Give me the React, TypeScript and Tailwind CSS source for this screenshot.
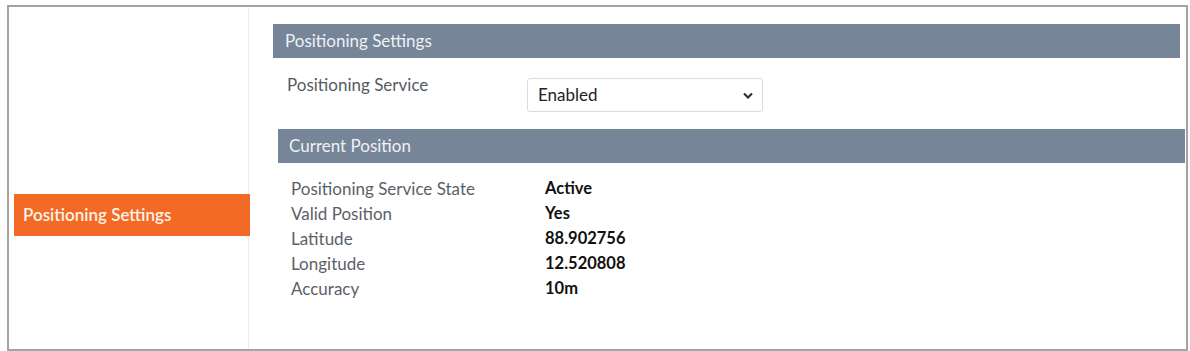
import { useState } from 'react';

const rows = [
  { label: 'Positioning Service State', value: 'Active' },
  { label: 'Valid Position', value: 'Yes' },
  { label: 'Latitude', value: '88.902756' },
  { label: 'Longitude', value: '12.520808' },
  { label: 'Accuracy', value: '10m' },
];

export default function App() {
  const [service, setService] = useState('Enabled');

  return (
    <div className="w-[1190px] h-[351px] bg-white pl-[7px] pt-[5px] font-['Lato','Liberation_Sans',sans-serif]">
      <div className="flex w-[1181px] h-[346px] border-2 border-[#a3a3a3]">
        {/* sidebar */}
        <div className="w-[240px] shrink-0 border-r border-[#ececec] pl-[5px] pt-[187px]">
          <div className="h-[42px] w-[236px] bg-[#f26a26] flex items-center pl-[9px] text-[17px] font-semibold text-[#fdf3e6]">
            Positioning Settings
          </div>
        </div>

        {/* content */}
        <div className="flex-1 pl-[24px] pr-[2px] pt-[17px]">
          <div className="w-[907px] h-[34px] bg-[#778599] flex items-center pl-[12px] text-[17px] text-[#eef1f5]">
            Positioning Settings
          </div>

          <div className="flex items-start h-[71px]">
            <div className="pl-[14px] pt-[14px] w-[254px] text-[17px] text-[#555b62]">Positioning Service</div>
            <div className="relative mt-[20px]">
              <select
                value={service}
                onChange={e => setService(e.target.value)}
                className="appearance-none w-[236px] h-[34px] border border-[#dcdcdc] rounded-[3px] bg-white pl-[10px] text-[17px] text-[#222] outline-none font-['Lato','Liberation_Sans',sans-serif]"
              >
                <option>Enabled</option>
                <option>Disabled</option>
              </select>
              <svg
                className="pointer-events-none absolute right-[10px] top-[14px]"
                width="10"
                height="7"
                viewBox="0 0 10 7"
              >
                <path d="M1 1.5 L5 5.5 L9 1.5" fill="none" stroke="#333" strokeWidth="2.2" />
              </svg>
            </div>
          </div>

          <div className="ml-[5px] w-[907px] h-[34px] bg-[#778599] flex items-center pl-[11px] text-[17px] text-[#eef1f5]">
            Current Position
          </div>

          <div className="ml-[18px] pt-[13px]">
            {rows.map(r => (
              <div key={r.label} className="flex h-[25px] items-center text-[17px]">
                <span className="w-[254px] text-[#5b6168]">{r.label}</span>
                <span className="font-bold text-[16.5px] text-[#111]">{r.value}</span>
              </div>
            ))}
          </div>
        </div>
      </div>
    </div>
  );
}
